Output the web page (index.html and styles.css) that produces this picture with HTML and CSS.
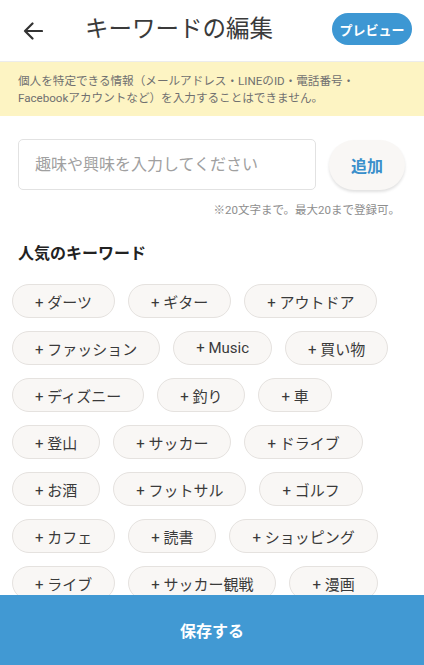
FILE: index.html
```html
<!DOCTYPE html>
<html lang="ja">
<head>
<meta charset="utf-8">
<link rel="stylesheet" href="styles.css">
</head>
<body>
<header class="header">
  <button class="back" aria-label="戻る">
    <svg width="20" height="18" viewBox="0 0 20 18"><path d="M19 9H2M9.5 1.5L2 9l7.5 7.5" fill="none" stroke="#333" stroke-width="2.2" stroke-linecap="round" stroke-linejoin="round"/></svg>
  </button>
  <h1 class="title">キーワードの編集</h1>
  <button class="preview">プレビュー</button>
</header>
<div class="notice">個人を特定できる情報（メールアドレス・LINEのID・電話番号・<br>Facebookアカウントなど）を入力することはできません。</div>
<main class="main">
  <div class="input-row">
    <input class="input" type="text" placeholder="趣味や興味を入力してください">
    <button class="add">追加</button>
  </div>
  <p class="note">※20文字まで。最大20まで登録可。</p>
  <h2 class="section">人気のキーワード</h2>
  <div class="chips">
    <span class="chip">+ ダーツ</span>
    <span class="chip">+ ギター</span>
    <span class="chip">+ アウトドア</span>
    <span class="chip">+ ファッション</span>
    <span class="chip">+ Music</span>
    <span class="chip">+ 買い物</span>
    <span class="chip">+ ディズニー</span>
    <span class="chip">+ 釣り</span>
    <span class="chip">+ 車</span>
    <span class="chip">+ 登山</span>
    <span class="chip">+ サッカー</span>
    <span class="chip">+ ドライブ</span>
    <span class="chip">+ お酒</span>
    <span class="chip">+ フットサル</span>
    <span class="chip">+ ゴルフ</span>
    <span class="chip">+ カフェ</span>
    <span class="chip">+ 読書</span>
    <span class="chip">+ ショッピング</span>
    <span class="chip">+ ライブ</span>
    <span class="chip">+ サッカー観戦</span>
    <span class="chip">+ 漫画</span>
    <span class="chip">+ 映画</span>
    <span class="chip">+ 旅行</span>
  </div>
</main>
<footer class="footer">
  <button class="save">保存する</button>
</footer>
</body>
</html>
```
FILE: styles.css
```css
* { box-sizing: border-box; }
html, body { margin: 0; padding: 0; }
body {
  font-family: Roboto, "Noto Sans CJK JP", sans-serif;
  color: #333;
  background: #fff;
  width: 424px;
  height: 665px;
  overflow: hidden;
}
button { font-family: inherit; border: none; cursor: pointer; }
.header {
  height: 61px;
  display: flex;
  align-items: center;
  padding: 0 12px 0 23px;
}
.back {
  background: none;
  padding: 0;
  width: 20px;
  height: 18px;
  display: flex;
  margin-top: 1px;
}
.title {
  margin: 0 0 0 42px;
  font-size: 23.5px;
  font-weight: 400;
  color: #3a3a3a;
  flex: 1;
  line-height: 1;
  margin-top: -2px;
}
.preview {
  width: 80px;
  height: 32px;
  border-radius: 16px;
  background: #3d97d3;
  color: #fff;
  font-size: 13px;
  font-weight: 700;
  padding: 0;
  margin-top: -3px;
}
.notice {
  background: #fdf4c3;
  border-top: 1px solid #ececec;
  height: 55px;
  padding: 11px 18px 0;
  font-size: 11.6px;
  font-weight: 400;
  line-height: 17px;
  color: #707070;
}
.main {
  padding: 23px 0 0 0;
}
.input-row {
  display: flex;
  align-items: center;
  padding: 0 18px 0 18px;
  gap: 13px;
}
.input {
  width: 298px;
  height: 51px;
  border: 1px solid #e2e2e2;
  border-radius: 5px;
  padding: 0 16px;
  font-family: inherit;
  font-size: 16px;
  font-weight: 400;
  color: #333;
  outline: none;
}
.input::placeholder { color: #a0a0a0; }
.add {
  width: 76px;
  height: 50px;
  border-radius: 25px;
  background: #f9f7f5;
  color: #3a8fcb;
  font-size: 16px;
  font-weight: 700;
  box-shadow: 0 2px 3px rgba(0,0,0,0.12);
  padding: 0;
}
.note {
  margin: 12px 24px 0 0;
  text-align: right;
  font-size: 11.5px;
  font-weight: 400;
  line-height: 16px;
  color: #8e8e8e;
}
.section {
  margin: 25px 0 0 18px;
  font-size: 16px;
  font-weight: 700;
  line-height: 22px;
  color: #222;
}
.chips {
  display: flex;
  flex-wrap: wrap;
  gap: 13px 13px;
  padding: 19px 12px 0 12px;
}
.chip {
  display: inline-flex;
  align-items: center;
  height: 34px;
  padding: 0 22px;
  border: 1px solid #e5e2df;
  border-radius: 17px;
  background: #f9f7f5;
  font-size: 15px;
  font-weight: 400;
  color: #3a3a3a;
  white-space: nowrap;
}
.footer {
  position: fixed;
  left: 0;
  right: 0;
  bottom: 0;
  height: 70px;
  background: #4199d3;
}
.save {
  width: 100%;
  height: 100%;
  background: transparent;
  color: #fff;
  font-size: 16px;
  font-weight: 700;
  padding: 0;
}
```
